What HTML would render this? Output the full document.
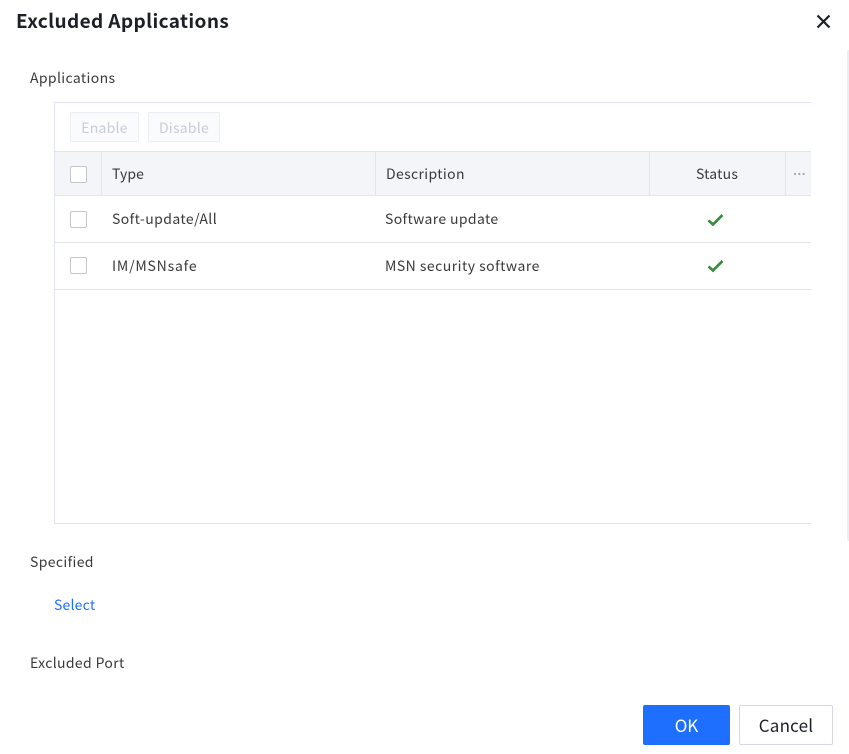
<!DOCTYPE html>
<html lang="en">
<head>
<meta charset="utf-8">
<title>Excluded Applications</title>
<style>
html,body{margin:0;padding:0;background:#fff;}
body{width:849px;height:754px;position:relative;overflow:hidden;font-family:"Noto Sans CJK SC","Liberation Sans",sans-serif;font-size:14px;color:#3a3a3a;}
.t{position:absolute;white-space:nowrap;line-height:20px;height:20px;letter-spacing:.36px;}
.b{position:absolute;background:#e1e4ed;}
.cb{position:absolute;left:70px;width:15px;height:15px;border:1px solid #c4c6cc;border-radius:2px;background:#fff;}
.tb{position:absolute;top:112px;height:28px;border:1px solid #eceef3;border-radius:2px;background:#fafbfc;color:#c9ccd4;text-align:center;line-height:30px;letter-spacing:.25px;}
</style>
</head>
<body>
<div class="t" style="left:16px;top:11px;font-size:19px;font-weight:700;color:#1c1f25;letter-spacing:.38px;">Excluded Applications</div>
<svg style="position:absolute;left:816px;top:14px" width="15" height="15" viewBox="0 0 15 15"><path d="M1.500 1.500L13.500 13.500M13.500 1.500L1.500 13.500" stroke="#1c1f25" stroke-width="2.200" fill="none"/></svg>
<div style="position:absolute;left:847px;top:50px;width:2px;height:491px;background:#eceef4;border-radius:2px 0 0 2px;"></div>

<div class="t" style="left:30px;top:68px;">Applications</div>

<!-- table frame -->
<div class="b" style="left:54px;top:102px;width:757px;height:1px;"></div>
<div class="b" style="left:54px;top:102px;width:1px;height:422px;"></div>
<div class="b" style="left:54px;top:523px;width:757px;height:1px;"></div>

<div class="tb" style="left:70px;width:67px;">Enable</div>
<div class="tb" style="left:148px;width:70px;">Disable</div>

<!-- header -->
<div style="position:absolute;left:55px;top:152px;width:756px;height:43px;background:#f4f5f9;"></div>
<div class="b" style="left:55px;top:151px;width:756px;height:1px;"></div>
<div class="b" style="left:55px;top:195px;width:756px;height:1px;"></div>
<div class="b" style="left:101px;top:152px;width:1px;height:43px;"></div>
<div class="b" style="left:375px;top:152px;width:1px;height:43px;"></div>
<div class="b" style="left:649px;top:152px;width:1px;height:43px;"></div>
<div class="b" style="left:785px;top:152px;width:1px;height:43px;"></div>
<div class="cb" style="top:166px;"></div>
<div class="t" style="left:112px;top:164px;letter-spacing:.1px;">Type</div>
<div class="t" style="left:386px;top:164px;">Description</div>
<div class="t" style="left:696px;top:164px;letter-spacing:.2px;">Status</div>
<svg style="position:absolute;left:793px;top:172px" width="14" height="4" viewBox="0 0 14 4"><circle cx="2" cy="2" r="1.100" fill="#a3a6ad"/><circle cx="6.300" cy="2" r="1.100" fill="#a3a6ad"/><circle cx="10.600" cy="2" r="1.100" fill="#a3a6ad"/></svg>

<!-- rows -->
<div class="cb" style="top:211px;"></div>
<div class="t" style="left:112px;top:209px;letter-spacing:.42px;">Soft-update/All</div>
<div class="t" style="left:385px;top:209px;letter-spacing:.36px;">Software update</div>
<svg style="position:absolute;left:707px;top:212px" width="17" height="16" viewBox="0 0 17 16"><path d="M1.500 8.500L6 12.500L15.500 3" stroke="#3d8b40" stroke-width="2.700" fill="none"/></svg>
<div class="b" style="left:55px;top:242px;width:756px;height:1px;"></div>

<div class="cb" style="top:257px;"></div>
<div class="t" style="left:112px;top:256px;letter-spacing:.8px;">IM/MSNsafe</div>
<div class="t" style="left:385px;top:256px;letter-spacing:.48px;">MSN security software</div>
<svg style="position:absolute;left:707px;top:258px" width="17" height="16" viewBox="0 0 17 16"><path d="M1.500 8.500L6 12.500L15.500 3" stroke="#3d8b40" stroke-width="2.700" fill="none"/></svg>
<div class="b" style="left:55px;top:289px;width:756px;height:1px;"></div>

<div class="t" style="left:30px;top:552px;">Specified</div>
<div class="t" style="left:54px;top:595px;color:#1f6fff;letter-spacing:.2px;">Select</div>
<div class="t" style="left:30px;top:653px;">Excluded Port</div>

<div style="position:absolute;left:643px;top:705px;width:87px;height:40px;background:#1f6fff;border-radius:2px;color:#fff;font-size:17px;line-height:40px;text-align:center;">OK</div>
<div style="position:absolute;left:739px;top:705px;width:92px;height:38px;border:1px solid #d5d8e0;border-radius:2px;color:#1c1f25;font-size:17px;line-height:38px;text-align:center;letter-spacing:.2px;">Cancel</div>
</body>
</html>
